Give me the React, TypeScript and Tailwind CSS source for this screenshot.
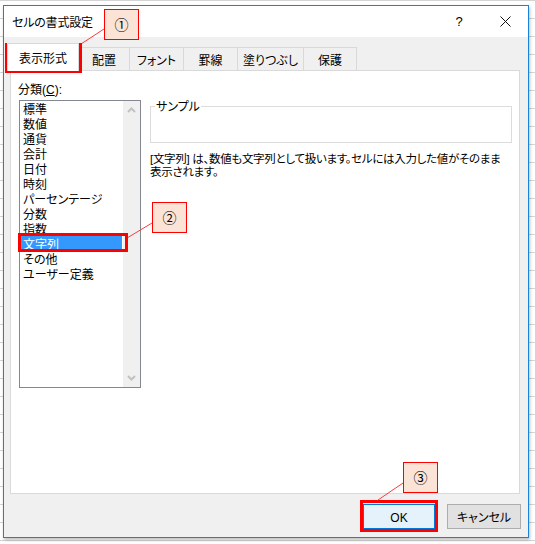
import type { ReactNode } from "react";

const jp =
	"font-['Liberation_Sans','Meiryo_UI','Noto_Sans_CJK_JP',sans-serif] [font-feature-settings:'palt']";

const categories = [
	"標準",
	"数値",
	"通貨",
	"会計",
	"日付",
	"時刻",
	"パーセンテージ",
	"分数",
	"指数",
	"文字列",
	"その他",
	"ユーザー定義",
];

const tabs = [
	{ label: "配置", w: "w-[51px]" },
	{ label: "フォント", w: "w-[54px]" },
	{ label: "罫線", w: "w-[54px]" },
	{ label: "塗りつぶし", w: "w-[66px]" },
	{ label: "保護", w: "w-[53px]" },
];

function Callout({ className, children }: { className: string; children: ReactNode }) {
	return (
		<div
			className={`absolute w-[35px] h-[31px] pt-[2px] border border-[#ff0000] bg-[#fbe4d5] flex items-center justify-center text-[14px] text-black ${className}`}
		>
			{children}
		</div>
	);
}

function Chevron({ up }: { up?: boolean }) {
	return (
		<svg width="9" height="6" viewBox="0 0 9 6" className="block">
			<path
				d={up ? "M1 5 L4.5 1.5 L8 5" : "M1 1 L4.5 4.5 L8 1"}
				fill="none"
				stroke="#c2c2c2"
				strokeWidth="2"
			/>
		</svg>
	);
}

export default function App() {
	return (
		<div
			className={`relative w-[535px] h-[544px] overflow-hidden bg-white bg-[linear-gradient(#d4d4d4_1px,transparent_1px)] bg-[length:100%_18px] text-[#000] ${jp}`}
		>
			{/* dialog */}
			<div className="ml-[3px] mt-[5px] w-[526px] h-[533px] border border-[#1883d7] bg-[#f0f0f0] flex flex-col shadow-[1px_2px_3px_rgba(0,0,0,0.25)]">
				{/* title bar */}
				<div className="h-[31px] shrink-0 bg-white flex items-center">
					<span className="pl-[8px] pt-[3px] text-[12px] tracking-[-0.2px]">セルの書式設定</span>
					<div className="ml-auto flex h-full">
						<div className="w-[46px] h-full flex items-center justify-center text-[13px]">?</div>
						<div className="w-[46px] h-full flex items-center justify-center">
							<svg width="11" height="11" viewBox="0 0 11 11">
								<path d="M0.5 0.5 L10.5 10.5 M10.5 0.5 L0.5 10.5" stroke="#111" strokeWidth="1" />
							</svg>
						</div>
					</div>
				</div>

				{/* tabs */}
				<div className="h-[33px] shrink-0 flex items-end pl-[3px]">
					<div className="relative z-10 -mb-px w-[72px] h-[28px] pt-[3px] bg-white border-t border-l border-r border-[#d9d9d9] flex items-center justify-center text-[12px]">
						表示形式
					</div>
					{tabs.map((t) => (
						<div
							key={t.label}
							className={`${t.w} h-[23px] pt-[3px] border-t border-r border-[#d9d9d9] flex items-center justify-center text-[12px]`}
						>
							{t.label}
						</div>
					))}
				</div>

				{/* panel */}
				<div className="ml-[6px] w-[510px] h-[424px] shrink-0 border border-[#d9d9d9] bg-white flex">
					<div className="pl-[8px] pt-[12px] flex flex-col">
						<div className="-ml-px h-[15px] leading-[15px] text-[12px]">
							分類(<span className="underline">C</span>):
						</div>
						<div className="mt-[2px] w-[122px] h-[288px] border border-[#828790] flex">
							<div className="w-[103px] flex flex-col">
								{categories.map((c) => (
									<div
										key={c}
										className={`h-[15px] pt-[2px] leading-[15px] text-[12px] whitespace-nowrap pl-[2px] ${
											c === "文字列" ? "ml-px mr-px bg-[#3399ff] text-white" : "ml-px"
										}`}
									>
										{c}
									</div>
								))}
							</div>
							<div className="w-[17px] bg-[#f0f0f0] flex flex-col items-center justify-between py-[6px]">
								<Chevron up />
								<Chevron />
							</div>
						</div>
					</div>

					<div className="ml-[9px] flex flex-col">
						<fieldset className="mt-[26px] w-[362px] border border-[#dcdcdc] px-0">
							<legend className="ml-[4px] px-px pt-[3px] text-[12px] leading-[15px]">サンプル</legend>
							<div className="h-[27px]" />
						</fieldset>
						<div className="mt-[10px] text-[11.5px] leading-[13px] whitespace-nowrap tracking-[-0.3px]">
							[文字列] は、数値も文字列として扱います。セルには入力した値がそのまま
							<br />
							表示されます。
						</div>
					</div>
				</div>

				{/* buttons */}
				<div className="mt-[10px] flex justify-end gap-[12px] pr-[7px]">
					<button
						type="button"
						className="w-[72px] h-[25px] pt-[2px] border border-[#0078d7] bg-[#e5f1fb] text-[12px]"
					>
						OK
					</button>
					<button
						type="button"
						className="w-[74px] h-[25px] pt-[2px] border border-[#adadad] bg-[#e1e1e1] text-[12px]"
					>
						キャンセル
					</button>
				</div>
			</div>

			{/* annotations */}
			<svg className="absolute inset-0 pointer-events-none" width="535" height="544">
				<line x1="104" y1="29" x2="81" y2="44" stroke="#ff3b3b" strokeWidth="1" />
				<line x1="152" y1="223" x2="127" y2="238" stroke="#ff3b3b" strokeWidth="1" />
				<line x1="403" y1="483" x2="378" y2="500" stroke="#ff3b3b" strokeWidth="1" />
			</svg>
			<div className="absolute left-[5px] top-[43px] w-[77px] h-[30px] border-[3px] border-[#ff0000]" />
			<div className="absolute left-[18px] top-[233px] w-[110px] h-[19px] border-[3px] border-[#ff0000]" />
			<div className="absolute left-[360px] top-[500px] w-[78px] h-[32px] border-[3px] border-[#ff0000]" />
			<Callout className="left-[104px] top-[9px]">①</Callout>
			<Callout className="left-[152px] top-[202px]">②</Callout>
			<Callout className="left-[403px] top-[462px]">③</Callout>
		</div>
	);
}
